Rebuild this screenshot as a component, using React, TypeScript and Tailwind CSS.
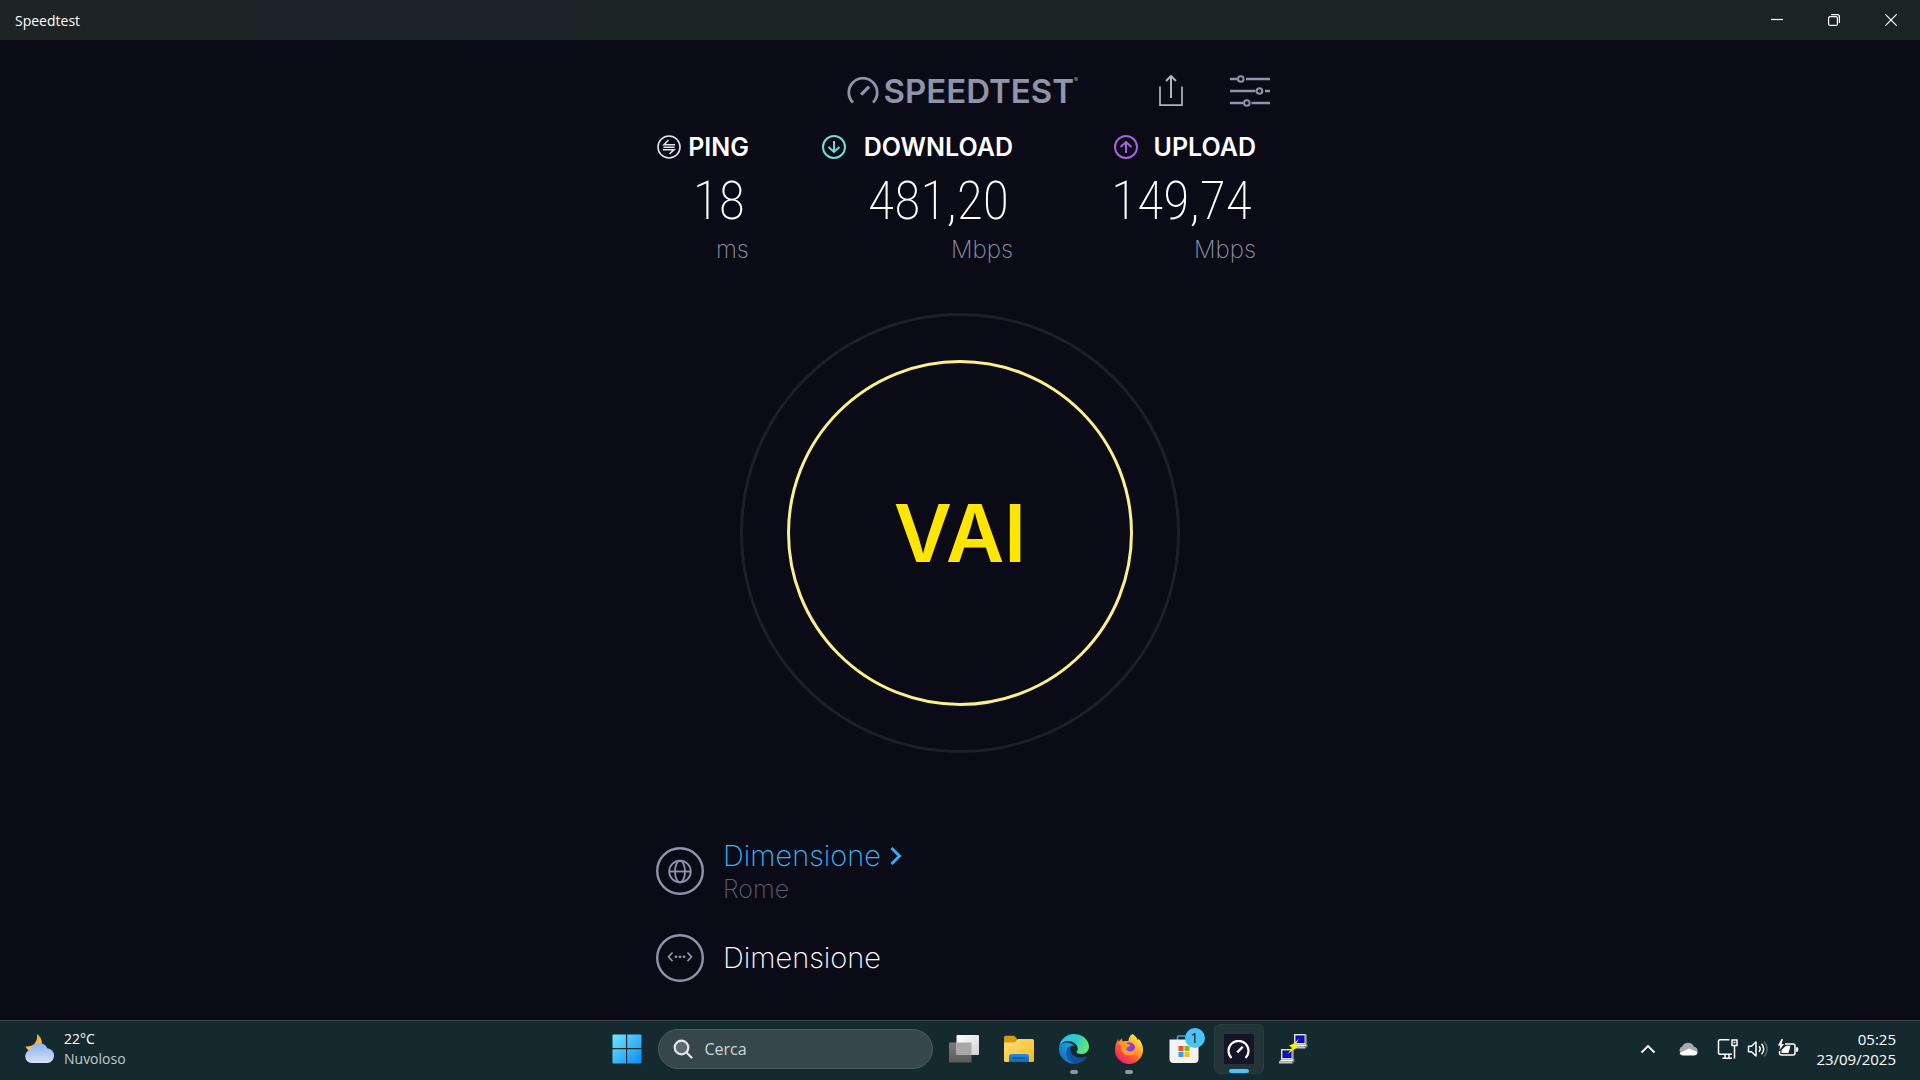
import type { ReactNode } from 'react';

function Gauge({ className, stroke = 3 }: { className: string; stroke?: number }) {
  return (
    <svg viewBox="0 0 32 27" className={className} fill="none" stroke="currentColor" strokeWidth={stroke}>
      <path d="M6 25.500a14.200 14.200 0 1 1 20 0" />
      <path d="M14.200 17.600 22 9.600" strokeWidth={stroke + 0.4} />
    </svg>
  );
}

function ShareIcon() {
  return (
    <svg viewBox="0 0 24 32" className="h-8 w-6" fill="none" stroke="#b4b4bf" strokeWidth="1.700">
      <path d="M1 11.500v18.600h22V11.500" />
      <path d="M12 23V2" strokeWidth="2" />
      <path d="M7 6 12 1l5 5" strokeWidth="2" />
    </svg>
  );
}

function SlidersIcon() {
  return (
    <svg viewBox="0 0 40 32" className="h-8 w-10" fill="none" stroke="#9193a8" strokeWidth="2.400">
      <path d="M0 4h7.500M16 4h24M0 16h25.500M35 16h5M0 28h13M21.500 28H40" />
      <circle cx="10.800" cy="4" r="2.800" strokeWidth="2" />
      <circle cx="29.500" cy="16" r="2.800" strokeWidth="2" />
      <circle cx="16.800" cy="28" r="2.800" strokeWidth="2" />
    </svg>
  );
}

function PingIcon() {
  return (
    <svg viewBox="0 0 24 24" className="size-6" fill="none" stroke="#e2e2ea" strokeWidth="1.600">
      <circle cx="12" cy="12" r="11" />
      <path d="M18 9.700H7L11.500 5M6.500 12.200h11M6 14.700h11L12.500 19" />
    </svg>
  );
}

function DownIcon() {
  return (
    <svg viewBox="0 0 24 24" className="size-6" fill="none" stroke="#6ae0d8" strokeWidth="2">
      <circle cx="12" cy="12" r="11" />
      <path d="M12 6v11M6.500 12l5.500 5 5.500-5" />
    </svg>
  );
}

function UpIcon() {
  return (
    <svg viewBox="0 0 24 24" className="size-6" fill="none" stroke="#a862e4" strokeWidth="2">
      <circle cx="12" cy="12" r="11" />
      <path d="M12 18V7M6.500 12 12 7l5.500 5" />
    </svg>
  );
}

type MetricProps = { icon: ReactNode; label: string; value: string; unit: string; width: string };

function Metric({ icon, label, value, unit, width }: MetricProps) {
  return (
    <section className={`flex flex-col items-end ${width}`}>
      <h2 className="flex h-8 w-full items-center justify-between text-[25px] font-semibold leading-8 text-white">
        {icon}
        {label}
      </h2>
      <p className="pr-1 pt-2 font-['Roboto_Condensed'] text-[54px] font-extralight leading-[60px] text-white">{value}</p>
      <p className="h-9 text-[24px] font-extralight leading-[38px] text-[#8e8fa3]">{unit}</p>
    </section>
  );
}

function GlobeIcon() {
  return (
    <svg viewBox="0 0 48 48" className="size-12 shrink-0" fill="none" stroke="#9193a8">
      <circle cx="24" cy="24" r="22.800" strokeWidth="2.400" />
      <g strokeWidth="1.800">
        <circle cx="24" cy="24.500" r="10.800" />
        <ellipse cx="24" cy="24.500" rx="5" ry="10.800" />
        <path d="M13.200 24.500h21.600" />
      </g>
    </svg>
  );
}

function ConnectionIcon() {
  return (
    <svg viewBox="0 0 48 48" className="size-12 shrink-0" fill="none" stroke="#9193a8">
      <circle cx="24" cy="24" r="22.800" strokeWidth="2.400" />
      <path d="m16.500 18.500-4 4.300 4 4.300M31.500 18.500l4 4.300-4 4.300" strokeWidth="1.700" />
      <g fill="#9193a8" stroke="none">
        <circle cx="20" cy="22.800" r="1.400" />
        <circle cx="24" cy="22.800" r="1.400" />
        <circle cx="28" cy="22.800" r="1.400" />
      </g>
    </svg>
  );
}

function TitleBar() {
  return (
    <header className="flex h-10 items-center justify-between bg-linear-to-r from-[#1e2425] from-12% via-[#1b222b] via-20% to-[#1b2425] to-32% pr-px pl-[15px] font-['Open_Sans'] text-white">
      <h1 className="text-[14px]">Speedtest</h1>
      <div className="flex h-full">
        <button type="button" aria-label="Riduci a icona" className="flex w-[57px] items-center justify-center">
          <svg viewBox="0 0 12 12" className="size-3" stroke="currentColor" strokeWidth="1.200"><path d="M0 5.500h12" /></svg>
        </button>
        <button type="button" aria-label="Ripristina" className="flex w-[57px] items-center justify-center">
          <svg viewBox="0 0 12 12" className="size-3" fill="none" stroke="currentColor" strokeWidth="1.200">
            <rect x="0.600" y="2.600" width="8.800" height="8.800" rx="1.500" />
            <path d="M3 .6h6.400a2 2 0 0 1 2 2V9" />
          </svg>
        </button>
        <button type="button" aria-label="Chiudi" className="flex w-[57px] items-center justify-center">
          <svg viewBox="0 0 12 12" className="size-3" stroke="currentColor" strokeWidth="1.200"><path d="m.3.300 11.400 11.400M11.700.3.300 11.700" /></svg>
        </button>
      </div>
    </header>
  );
}

function WeatherIcon() {
  return (
    <svg viewBox="0 0 32 32" className="size-8">
      <defs>
        <linearGradient id="moon" x1="0" y1="0" x2="0" y2="1"><stop offset="0" stopColor="#f9a825" /><stop offset="1" stopColor="#f4c06a" /></linearGradient>
        <linearGradient id="cloud" x1="0" y1="0" x2="0" y2="1"><stop offset="0" stopColor="#8fb2ee" /><stop offset="1" stopColor="#d5def8" /></linearGradient>
      </defs>
      <path d="M13 1c6 4 7 12.500 0 16.500-4.500 2-10 .5-11.500-4 8 1 12.500-5 11.500-12.500Z" fill="url(#moon)" />
      <path d="M7.500 30a6.800 6.800 0 0 1-.6-13.500 8.800 8.800 0 0 1 16.400-1.200 7.400 7.400 0 0 1 .4 14.700Z" fill="url(#cloud)" />
    </svg>
  );
}

function StartIcon() {
  return (
    <svg viewBox="0 0 30 30" className="size-[30px]">
      <defs><linearGradient id="win" x1="0" y1="0" x2="1" y2="1"><stop offset="0" stopColor="#6fe6ff" /><stop offset="1" stopColor="#0a8cf5" /></linearGradient></defs>
      <path fill="url(#win)" d="M1.500.5H14V14H.5V1.500a1 1 0 0 1 1-1ZM15.200.5H28.500a1 1 0 0 1 1 1V14H15.200ZM.5 15.200H14V29.500H1.500a1 1 0 0 1-1-1ZM15.200 15.200H29.500V28.500a1 1 0 0 1-1 1H15.200Z" />
    </svg>
  );
}

function TaskViewIcon() {
  return (
    <svg viewBox="0 0 30 30" className="size-[30px]">
      <defs>
        <linearGradient id="tvf" x1="0" y1="0" x2="1" y2="1"><stop offset="0" stopColor="#ffffff" /><stop offset="1" stopColor="#d2d2d2" /></linearGradient>
        <linearGradient id="tvb" x1="0" y1="0" x2="0" y2="1"><stop offset="0" stopColor="#7c7c7c" /><stop offset="1" stopColor="#5a5a5a" /></linearGradient>
      </defs>
      <rect x="0" y="8.500" width="22.500" height="20" rx="1" fill="url(#tvb)" />
      <rect x="7.500" y="1" width="22.500" height="20" rx="1" fill="url(#tvf)" />
      <path d="M7.500 8.500h15V21h-15Z" fill="#a8a8a8" />
    </svg>
  );
}

function FolderIcon() {
  return (
    <svg viewBox="0 0 30 30" className="size-[30px]">
      <defs>
        <linearGradient id="fold" x1="0" y1="0" x2="1" y2="1"><stop offset="0" stopColor="#ffe07a" /><stop offset="1" stopColor="#f6b91e" /></linearGradient>
        <linearGradient id="tray" x1="0" y1="0" x2="0" y2="1"><stop offset="0" stopColor="#1f8fe0" /><stop offset="1" stopColor="#1568b5" /></linearGradient>
      </defs>
      <path d="M0 3.500A1.800 1.800 0 0 1 1.800 1.700h7.600c1 0 1.600.6 2.300 1.500L13 5v5H0Z" fill="#d69a12" />
      <path d="M0 8.500h9.500c1.500 0 2-.4 2.700-1.400L13.800 5H28.500A1.500 1.500 0 0 1 30 6.500v20a1.500 1.500 0 0 1-1.500 1.500h-27A1.500 1.500 0 0 1 0 26.500Z" fill="url(#fold)" />
      <path d="M5 28v-5.200a2.800 2.800 0 0 1 2.800-2.800h14.400a2.800 2.800 0 0 1 2.800 2.800V28Z" fill="url(#tray)" />
      <path d="M8.500 24h13" stroke="#0c4a86" strokeWidth="1.200" />
    </svg>
  );
}

function EdgeIcon() {
  return (
    <svg viewBox="0 0 256 256" className="size-[30px]">
      <defs>
        <linearGradient id="eg1" x1="0.200" y1="0.700" x2="1" y2="0.700"><stop offset="0" stopColor="#0c59a4" /><stop offset="1" stopColor="#114a8b" /></linearGradient>
        <linearGradient id="eg2" x1="0.800" y1="0.300" x2="0.200" y2="1"><stop offset="0" stopColor="#1b9de2" /><stop offset="0.600" stopColor="#1580cf" /><stop offset="1" stopColor="#0c62b5" /></linearGradient>
        <linearGradient id="eg3" x1="0" y1="0.300" x2="1" y2="0.600"><stop offset="0" stopColor="#35bff0" /><stop offset="0.500" stopColor="#2dcbc8" /><stop offset="1" stopColor="#66eb6e" /></linearGradient>
      </defs>
      <path fill="url(#eg1)" d="M231 190.500c-3.400 1.800-6.900 3.400-10.500 4.700a101 101 0 0 1-35.900 6.500c-47.300 0-88.500-32.500-88.500-74.300.1-11.400 6.400-21.900 16.400-27.300-42.800 1.800-53.800 46.400-53.800 72.500 0 73.900 68.100 81.400 82.800 81.400 7.900 0 19.800-2.300 27-4.600l1.300-.4a128.300 128.300 0 0 0 66.600-52.800c2.200-3.300-1.600-7.500-5.400-5.700Z" />
      <path fill="url(#eg2)" d="M105.700 241.400a79.200 79.200 0 0 1-22.700-21.300c-40.700-55.800-16.200-102.600 10.900-113 6-2.900 11.700-6.500 18.600-7a29 29 0 0 1 23.700 11.500C106 58 12 58 0 121c-.5 20 4 44 13 61a127.800 127.800 0 0 0 75.700 64.600c22.300 6.300 48 7.800 69.500 1.400-17 3-36 2-52.500-6.600Z" />
      <path fill="url(#eg3)" d="M152.300 148.900c-.9 1-3.400 2.500-3.400 5.600 0 2.600 1.700 5.200 4.800 7.300 14.300 10 41.400 8.600 41.500 8.600 10.700 0 21.100-2.900 30.300-8.300A61.400 61.400 0 0 0 256 109c.3-22.400-8-37.300-11.300-43.900C223.500 23.900 178 .2 128.400.2A128 128 0 0 0 0 126.400c.5-36.500 36.800-66 80-66 3.500 0 23.500.3 42 10 16.300 8.600 24.900 19 30.800 29.200 6.200 10.700 7.300 24.100 7.300 29.500 0 5.300-2.700 13.300-7.800 19.800Z" />
    </svg>
  );
}

function FirefoxIcon() {
  return (
    <svg viewBox="0 0 30 30" className="size-[30px]">
      <defs>
        <linearGradient id="ff1" x1="0.850" y1="0.100" x2="0.200" y2="0.950"><stop offset="0" stopColor="#fff04a" /><stop offset="0.350" stopColor="#ffa62a" /><stop offset="0.650" stopColor="#ff5338" /><stop offset="1" stopColor="#ef1c70" /></linearGradient>
        <radialGradient id="ff2"><stop offset="0" stopColor="#6a4ff0" /><stop offset="1" stopColor="#9a35c8" /></radialGradient>
      </defs>
      <path fill="url(#ff1)" d="M18.500 0c3.500 2 5 5 5.500 6.500.4-.7.400-1.500.3-2 3 2.800 5 7.500 4.700 12A14 14 0 0 1 1 15.500C1 11 2.500 8 4.300 4.800c0 1 .1 1.900.5 2.600 1-1.300 2-2.300 3.400-3 0 1.400.1 2.300.7 3.100 1.500-.6 3.500-.6 5.400-.4.2-2.800 1.700-5.600 4.200-7.100Z" />
      <circle cx="15" cy="14.500" r="6.200" fill="url(#ff2)" />
      <path fill="#ff9a28" d="M4.800 8.500c3-1.500 6.500-1 8.700 1.500 1.300.2 2.500.4 3 1.300-.8 1.700-3 1.600-4 2.700-.6 1.500 1.500 3.500 4 3.500 3 0 4.500-3 4.600-5.500 2 4.500-.5 9.500-6 9.500-5.800 0-8.500-5-7.300-9.500-1.300-.8-2.500-2-3-3.500Z" />
    </svg>
  );
}

function StoreIcon() {
  return (
    <svg viewBox="0 0 30 30" className="size-[30px]">
      <path d="M8.500 6V3A1 1 0 0 1 9.500 2h11a1 1 0 0 1 1 1v3" fill="none" stroke="#27a8ea" strokeWidth="1.600" />
      <path d="M.5 5.500h29V25a4 4 0 0 1-4 4h-21a4 4 0 0 1-4-4Z" fill="#f3f3f3" />
      <path d="M9.500 12h5v5h-5Z" fill="#f1502f" />
      <path d="M15.500 12h5v5h-5Z" fill="#7dba1a" />
      <path d="M9.500 18h5v5h-5Z" fill="#2aa3ec" />
      <path d="M15.500 18h5v5h-5Z" fill="#fdb813" />
    </svg>
  );
}

function Computer({ x, y }: { x: number; y: number }) {
  return (
    <g transform={`translate(${x} ${y})`}>
      <path d="M2 0h11.500l1 1v9.500H2Z" fill="#dcdcdc" />
      <path d="M13.500 0l1 1v9.500h-1Z" fill="#6d6d6d" />
      <path d="M3.500 1.500h9v7.500h-9Z" fill="#0d0d2a" />
      <path d="M4.300 2.300h7.400v6H4.300Z" fill="#0c0ce0" />
      <path d="M0 12.500l2.500-2h13L13.500 12.500Z" fill="#f2f2f2" />
      <path d="M0 12.500h13.500v2H0Z" fill="#c4c4c4" />
      <path d="M13.500 12.500l2-2v2l-2 2Z" fill="#7a7a7a" />
    </g>
  );
}

function PuttyIcon() {
  return (
    <svg viewBox="0 0 30 30" className="size-[30px]">
      <Computer x={13} y={0} />
      <Computer x={0} y={15} />
      <path d="M20.500 4.500 14 10l-4 1.500 3 2.500-4.500 6L15 15.500l4-2.500-3-2Z" fill="#ffee00" />
    </svg>
  );
}

function TaskButton({ label, children, state }: { label: string; children: ReactNode; state?: 'open' | 'active' }) {
  return (
    <button
      type="button"
      aria-label={label}
      className={`relative flex size-[50px] items-center justify-center rounded-md ${state === 'active' ? 'border border-[#2b3c41] bg-[#24353a]' : ''}`}
    >
      {children}
      {state === 'open' && <span className="absolute bottom-0 h-1 w-2 rounded-full bg-[#8f9a9d]" />}
      {state === 'active' && <span className="absolute bottom-0 h-1 w-5 rounded-full bg-[#4cc2ff]" />}
    </button>
  );
}

function Tray() {
  return (
    <div className="flex items-center justify-end pr-6">
      <button type="button" aria-label="Mostra icone nascoste" className="flex w-10 justify-center">
        <svg viewBox="0 0 16 10" className="h-[10px] w-4" fill="none" stroke="currentColor" strokeWidth="1.800"><path d="m1.500 8.500 6.500-6.500 6.500 6.500" /></svg>
      </button>
      <button type="button" aria-label="OneDrive" className="flex w-10 justify-center">
        <svg viewBox="0 0 20 14" className="h-[14px] w-5">
          <path d="M4 12a4 4 0 0 1 .2-7.500A6.500 6.500 0 0 1 16 4.800a4 4 0 0 1 3.500 5Z" fill="#a5abad" />
          <path d="M1.500 11 11 6.500l8.500 3.500a3.500 3.500 0 0 1-3 3.500H4.500a4 4 0 0 1-3-2.500Z" fill="#fff" />
        </svg>
      </button>
      <button type="button" aria-label="Rete, volume e batteria" className="flex w-[100px] items-center justify-center gap-2">
        <svg viewBox="0 0 22 22" className="size-[22px]" fill="none" stroke="currentColor" strokeWidth="1.500">
          <path d="M12.500 1.700H3A1.500 1.500 0 0 0 1.500 3.200v11.600A1.500 1.500 0 0 0 3 16.300h12M8 16.300v3.500M12 16.300v3.500M5.500 20.200h9.500" />
          <path d="M15 2h5v5.500h-5ZM17.500 7.500v13M16.500 4.500h2" />
        </svg>
        <svg viewBox="0 0 22 18" className="h-[18px] w-[22px]" fill="none" stroke="currentColor" strokeWidth="1.500">
          <path d="M1.500 6.300h3L9 2v14l-4.500-4.300h-3Z" strokeLinejoin="round" />
          <path d="M12 6.300a4 4 0 0 1 0 5.400M14.500 3.700a7.500 7.500 0 0 1 0 10.600" />
          <path d="M17 1.500a10.600 10.600 0 0 1 0 15" stroke="#54656a" />
        </svg>
        <svg viewBox="0 0 22 20" className="h-5 w-[22px]">
          <path d="M8 5h8a2 2 0 0 1 2 2v7a2 2 0 0 1-2 2H4.500a2 2 0 0 1-2-2v-2" fill="none" stroke="#fff" strokeWidth="1.500" />
          <path d="M4.500 14V11L9 6.800H13.500L11.500 14Z" fill="#fff" />
          <path d="M19 8.300h1.200a1 1 0 0 1 1 1v2.500a1 1 0 0 1-1 1H19Z" fill="#fff" />
          <path d="M4.500 0 .8 6.500h2.400L2.500 11l4.500-6H4.500L6 0Z" fill="#fff" />
        </svg>
      </button>
      <button type="button" className="ml-1 w-[84px] text-right text-[15px] leading-5">
        <time dateTime="2025-09-23T05:25" className="flex flex-col items-end whitespace-nowrap">
          <span>05:25</span>
          <span>23/09/2025</span>
        </time>
      </button>
    </div>
  );
}

function Taskbar() {
  return (
    <footer className="grid h-[60px] grid-cols-[1fr_auto_1fr] items-center border-t border-[#3b454d] bg-[#142a2f] pb-[3px] font-['Open_Sans'] text-white">
      <button type="button" className="flex items-center gap-2 justify-self-start pl-6 text-left text-[14px] leading-5">
        <WeatherIcon />
        <span className="flex flex-col">
          <span>22°C</span>
          <span className="text-[#c3cacc]">Nuvoloso</span>
        </span>
      </button>
      <nav className="flex items-center gap-[5px]">
        <TaskButton label="Start"><StartIcon /></TaskButton>
        <label className="mx-px flex h-10 w-[275px] items-center gap-3 rounded-full border border-[#4b5c61] bg-[#36474c] px-[14px]">
          <svg viewBox="0 0 20 20" className="size-5 shrink-0" fill="none" stroke="#e4e8ea" strokeWidth="2.200">
            <circle cx="8.500" cy="8.500" r="6.800" fill="#5d6b70" />
            <path d="m13.500 13.500 5 5" strokeLinecap="round" />
          </svg>
          <input type="text" placeholder="Cerca" aria-label="Cerca" className="w-full bg-transparent text-[16px] outline-none placeholder:text-[#cfd6d8]" />
        </label>
        <TaskButton label="Visualizzazione attività"><TaskViewIcon /></TaskButton>
        <TaskButton label="Esplora file"><FolderIcon /></TaskButton>
        <TaskButton label="Edge" state="open"><EdgeIcon /></TaskButton>
        <TaskButton label="Firefox" state="open"><FirefoxIcon /></TaskButton>
        <TaskButton label="Microsoft Store">
          <StoreIcon />
          <span className="absolute top-1 right-1 flex size-5 items-center justify-center rounded-full bg-[#4cc2ff] text-[14px] leading-5 text-[#10242b]">1</span>
        </TaskButton>
        <TaskButton label="Speedtest" state="active">
          <span className="flex size-[30px] items-center justify-center bg-[#15152a]">
            <Gauge className="h-[19px] w-[23px] text-white" stroke={3} />
          </span>
        </TaskButton>
        <TaskButton label="PuTTY"><PuttyIcon /></TaskButton>
      </nav>
      <Tray />
    </footer>
  );
}

export default function App() {
  return (
    <div className="flex min-h-screen flex-col bg-[#0b0b18] font-['Inter']">
      <TitleBar />
      <main className="flex grow flex-col items-center">
        <div className="flex h-[91px] w-[620px] items-center justify-end pt-[10px]">
          <div className="flex items-center gap-1 text-[#9193a8]">
            <Gauge className="h-[27px] w-8" stroke={2.800} />
            <span className="flex items-start text-[33px] font-semibold leading-10">
              SPEEDTEST
              <span className="text-[6px] leading-[18px]">®</span>
            </span>
          </div>
          <button type="button" aria-label="Condividi" className="ml-[81px]"><ShareIcon /></button>
          <button type="button" aria-label="Impostazioni" className="ml-[47px]"><SlidersIcon /></button>
        </div>
        <div className="flex w-[606px] items-start">
          <Metric icon={<PingIcon />} label="PING" value="18" unit="ms" width="w-[92px]" />
          <Metric icon={<DownIcon />} label="DOWNLOAD" value="481,20" unit="Mbps" width="ml-[73px] w-[191px]" />
          <Metric icon={<UpIcon />} label="UPLOAD" value="149,74" unit="Mbps" width="ml-[101px] w-[142px]" />
        </div>
        <div className="mt-[46px] flex size-[440px] items-center justify-center rounded-full border-3 border-[#1f1f28]">
          <button type="button" className="size-[346px] rounded-full border-3 border-[#fdf08a] text-[80px] font-semibold text-[#ffe600]">
            VAI
          </button>
        </div>
        <div className="mt-[85px] flex w-[608px] flex-col gap-[30px] pb-[28px]">
          <div className="flex items-center gap-[19px]">
            <GlobeIcon />
            <div>
              <a href="#server" className="flex items-center gap-[9px] text-[29px] font-extralight leading-9 text-[#36b5f5]">
                Dimensione
                <svg viewBox="0 0 12 20" className="h-5 w-3" fill="none" stroke="#38aaf5" strokeWidth="3"><path d="m1.500 2 8 8-8 8" /></svg>
              </a>
              <p className="text-[25px] font-extralight leading-[30px] text-[#5d5e6e]">Rome</p>
            </div>
          </div>
          <div className="flex items-center gap-[19px]">
            <ConnectionIcon />
            <p className="text-[29px] font-extralight leading-9 text-white">Dimensione</p>
          </div>
        </div>
      </main>
      <Taskbar />
    </div>
  );
}
